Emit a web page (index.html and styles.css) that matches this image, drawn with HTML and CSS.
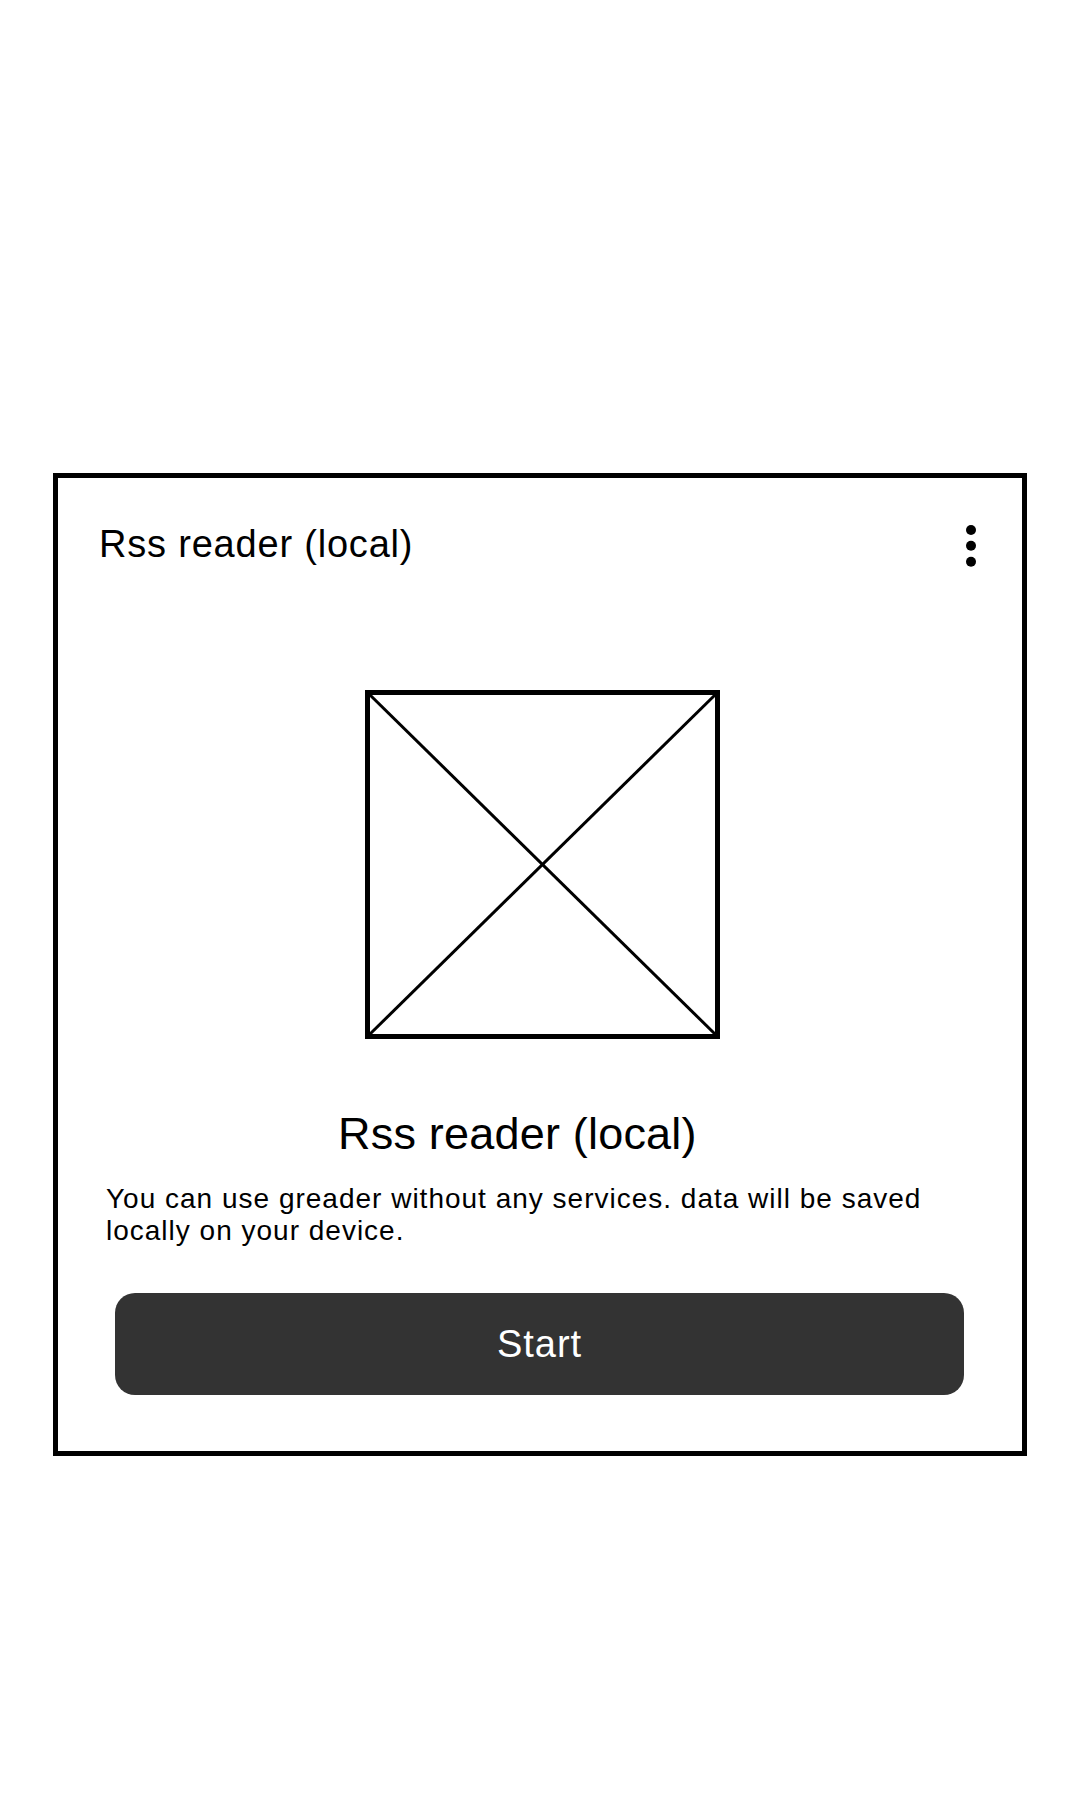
FILE: index.html
```html
<!DOCTYPE html>
<html lang="en">
<head>
<meta charset="utf-8">
<title>Rss reader (local)</title>
<link rel="stylesheet" href="styles.css">
</head>
<body>
<div class="card">
  <div class="header">
    <div class="header-title">Rss reader (local)</div>
    <svg class="menu" width="12" height="44" viewBox="0 0 12 44" aria-label="more">
      <circle cx="6" cy="6" r="5" fill="#000"/>
      <circle cx="6" cy="21.7" r="5" fill="#000"/>
      <circle cx="6" cy="37.7" r="5" fill="#000"/>
    </svg>
  </div>
  <div class="image-wrap">
    <svg class="placeholder" width="355" height="349" viewBox="0 0 355 349">
      <rect x="2.5" y="2.5" width="350" height="344" fill="none" stroke="#000" stroke-width="5"/>
      <line x1="3" y1="3" x2="352" y2="346" stroke="#000" stroke-width="3"/>
      <line x1="352" y1="3" x2="3" y2="346" stroke="#000" stroke-width="3"/>
    </svg>
  </div>
  <div class="title">Rss reader (local)</div>
  <p class="desc">You can use greader without any services. data will be saved locally on your device.</p>
  <div class="btn">Start</div>
</div>
</body>
</html>
```

FILE: styles.css
```css
html, body {
  margin: 0;
  padding: 0;
  background: #ffffff;
}

body {
  font-family: "Liberation Sans", Arial, sans-serif;
  color: #000;
  padding-top: 473px;
  padding-left: 53px;
}

.card {
  box-sizing: border-box;
  width: 974px;
  height: 983px;
  border: 5px solid #000;
  display: flex;
  flex-direction: column;
}

.header {
  display: flex;
  justify-content: space-between;
  align-items: flex-start;
  padding: 44px 45px 0 41px;
}

.header-title {
  font-size: 38px;
  line-height: 44px;
  letter-spacing: 0.8px;
}

.menu {
  display: block;
  margin-top: 2px;
}

.image-wrap {
  margin-top: 122px;
  margin-left: 307px;
}

.placeholder {
  display: block;
}

.title {
  margin-top: 69px;
  padding-left: 280px;
  font-size: 45px;
  line-height: 52px;
  letter-spacing: 0.2px;
}

.desc {
  margin: 23px 0 0 0;
  padding: 0 60px 0 48px;
  font-size: 28px;
  line-height: 32px;
  letter-spacing: 1px;
}

.btn {
  margin-top: 46px;
  margin-left: 57px;
  width: 849px;
  height: 102px;
  border-radius: 20px;
  background: #333333;
  color: #ffffff;
  font-size: 38px;
  letter-spacing: 1px;
  display: flex;
  align-items: center;
  justify-content: center;
}
```
